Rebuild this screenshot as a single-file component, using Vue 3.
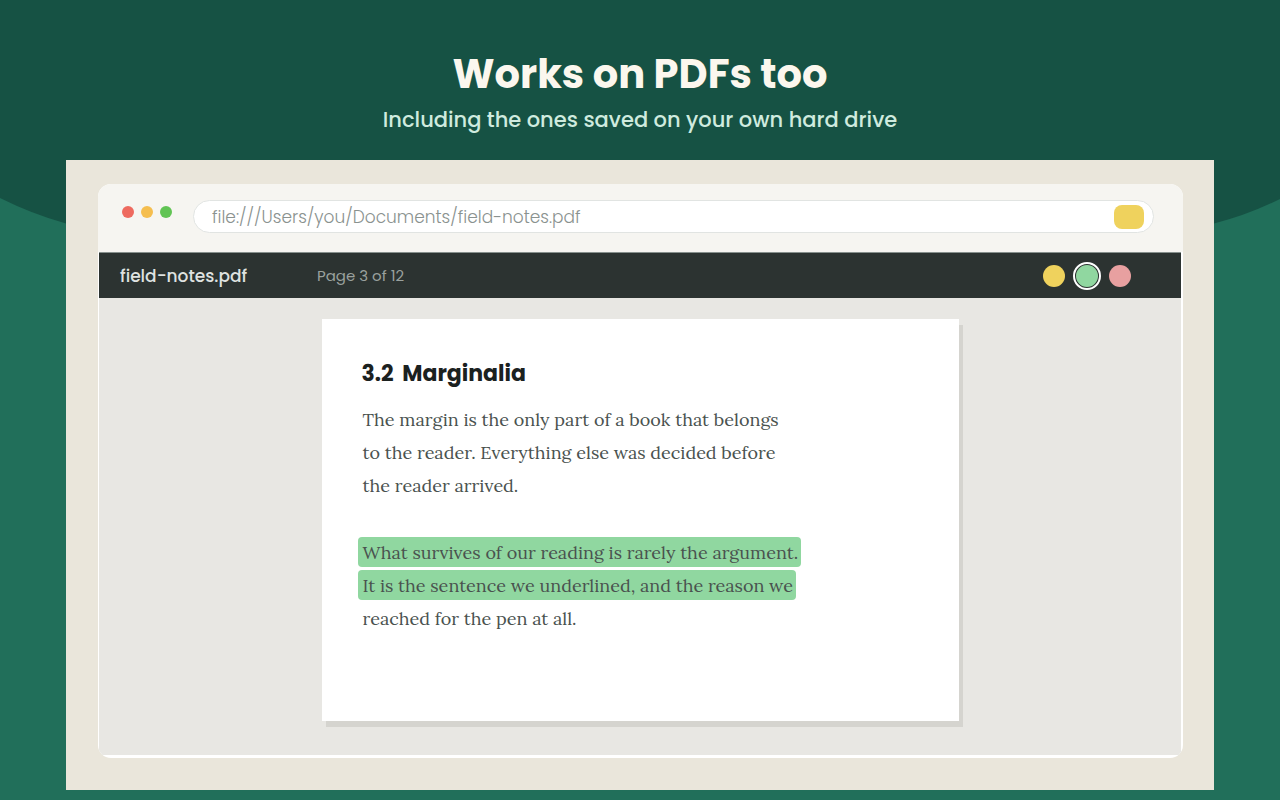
<script setup>
const lead = [
  'The margin is the only part of a book that belongs',
  'to the reader. Everything else was decided before',
  'the reader arrived.',
]
const body = [
  { text: 'What survives of our reading is rarely the argument.', marked: true },
  { text: 'It is the sentence we underlined, and the reason we', marked: true },
  { text: 'reached for the pen at all.', marked: false },
]
const swatches = [
  { name: 'Yellow', tone: 'yellow', on: false },
  { name: 'Green', tone: 'green', on: true },
  { name: 'Pink', tone: 'pink', on: false },
]
</script>

<template>
  <main class="promo">
    <svg class="backdrop" viewBox="0 0 1280 800" preserveAspectRatio="none" aria-hidden="true">
      <path d="M0 0H1280V199Q1248 215 1214 223.500H66Q32 214 0 198Z" fill="#165244" />
    </svg>
    <header class="intro">
      <h1>Works on PDFs too</h1>
      <p>Including the ones saved on your own hard drive</p>
    </header>
    <section class="stage">
      <div class="browser">
        <div class="chrome">
          <div class="lights" aria-hidden="true">
            <span class="light red"></span>
            <span class="light amber"></span>
            <span class="light lime"></span>
          </div>
          <div class="address">
            <input type="text" aria-label="Address" value="file:///Users/you/Documents/field-notes.pdf" />
            <button class="extension" type="button" aria-label="Highlighter"></button>
          </div>
        </div>
        <div class="toolbar">
          <span class="filename">field-notes.pdf</span>
          <span class="pages">Page 3 of 12</span>
          <div class="swatches">
            <button
              v-for="s in swatches"
              :key="s.tone"
              type="button"
              class="swatch"
              :class="[s.tone, { on: s.on }]"
              :aria-label="s.name"
              :aria-pressed="s.on"
            ></button>
          </div>
        </div>
        <div class="viewer">
          <article class="sheet">
            <h2><span class="number">3.2</span> Marginalia</h2>
            <p>
              <span v-for="line in lead" :key="line" class="line">{{ line }}</span>
            </p>
            <p>
              <span v-for="l in body" :key="l.text" class="line">
                <mark v-if="l.marked">{{ l.text }}</mark>
                <template v-else>{{ l.text }}</template>
              </span>
            </p>
          </article>
        </div>
      </div>
    </section>
  </main>
</template>

<style>
body {
  background: #216f5a;
}
</style>

<style scoped>
.promo {
  position: relative;
  box-sizing: border-box;
  min-height: 100vh;
  padding: 48px 66px 10px;
  display: flex;
  flex-direction: column;
  font-family: Poppins, Inter, "Liberation Sans", sans-serif;
}
.backdrop {
  position: absolute;
  inset: 0;
  width: 100%;
  height: 100%;
}
.intro {
  position: relative;
  height: 112px;
  text-align: center;
}
h1 {
  margin: 0;
  font-size: 40px;
  line-height: 52px;
  font-weight: 700;
  color: #fbf7ee;
}
.intro p {
  margin: 6px 0 0;
  font-size: 21px;
  line-height: 28px;
  font-weight: 500;
  color: #cfebdf;
}
.stage {
  position: relative;
  flex: 1;
  display: flex;
  padding: 24px 31px 32px 32px;
  background: #eae6db;
}
.browser {
  flex: 1;
  display: flex;
  flex-direction: column;
  border-radius: 13px;
  overflow: hidden;
  background: #fff;
}
.chrome {
  display: flex;
  align-items: flex-start;
  gap: 21px;
  padding: 16px 29px 19px 24px;
  background: #f6f5f1;
}
.lights {
  display: flex;
  gap: 7px;
  padding-top: 6px;
}
.light {
  width: 12px;
  height: 12px;
  border-radius: 50%;
}
.red { background: #ee6a5f; }
.amber { background: #f5be4f; }
.lime { background: #61c454; }
.address {
  flex: 1;
  display: flex;
  align-items: center;
  box-sizing: border-box;
  height: 33px;
  padding: 0 9px 0 18px;
  border: 1px solid #e1e4e2;
  border-radius: 17px;
  background: #fff;
}
.address input {
  flex: 1;
  min-width: 0;
  padding: 0;
  border: 0;
  outline: 0;
  background: none;
  font-family: inherit;
  font-size: 17px;
  font-weight: 300;
  line-height: 24px;
  color: #8a928f;
}
.extension {
  width: 30px;
  height: 24px;
  padding: 0;
  border: 0;
  border-radius: 8px;
  background: #efd25d;
}
.toolbar {
  box-sizing: border-box;
  display: flex;
  align-items: center;
  height: 46px;
  margin: 0 2px 0 1px;
  padding: 0 47px 0 21px;
  border-top: 1px solid #87908d;
  background: #2c3331;
}
.filename {
  width: 197px;
  font-size: 17px;
  line-height: 24px;
  font-weight: 500;
  color: #dfe2e0;
}
.pages {
  font-size: 15px;
  line-height: 24px;
  color: #9aa19e;
}
.swatches {
  display: flex;
  align-items: center;
  gap: 5px;
  margin-left: auto;
}
.swatch {
  box-sizing: border-box;
  width: 28px;
  height: 28px;
  padding: 0;
  border: 3px solid transparent;
  border-radius: 50%;
  background-clip: padding-box;
}
.yellow { background-color: #efd25d; }
.green { background-color: #90d7a0; }
.pink { background-color: #e8a0a0; }
.on {
  outline: 2px solid #fff;
  outline-offset: -2px;
}
.viewer {
  flex: 1;
  display: flex;
  justify-content: center;
  margin: 0 2px 3px 1px;
  padding: 21px 20px 34px;
  background: #e8e7e3;
}
.sheet {
  box-sizing: border-box;
  width: 637px;
  padding: 39px 36px;
  background: #fff;
  box-shadow: 4px 6px 0 #d5d4cf;
}
h2 {
  margin: 0 0 13px 4px;
  font-size: 22px;
  line-height: 32px;
  font-weight: 700;
  color: #1b211f;
}
.number {
  margin-right: 4px;
}
.sheet p {
  margin: 0 0 34px;
  font-family: Lora, "Liberation Serif", serif;
  font-size: 18px;
  color: #4a524f;
}
.line {
  display: block;
  height: 33px;
  padding-left: 5px;
  line-height: 33px;
  white-space: nowrap;
}
mark {
  display: inline-block;
  margin-left: -5px;
  padding: 0 3px 0 5px;
  height: 30px;
  line-height: 31px;
  border-radius: 4px;
  background: #90d7a0;
  color: inherit;
}
</style>
